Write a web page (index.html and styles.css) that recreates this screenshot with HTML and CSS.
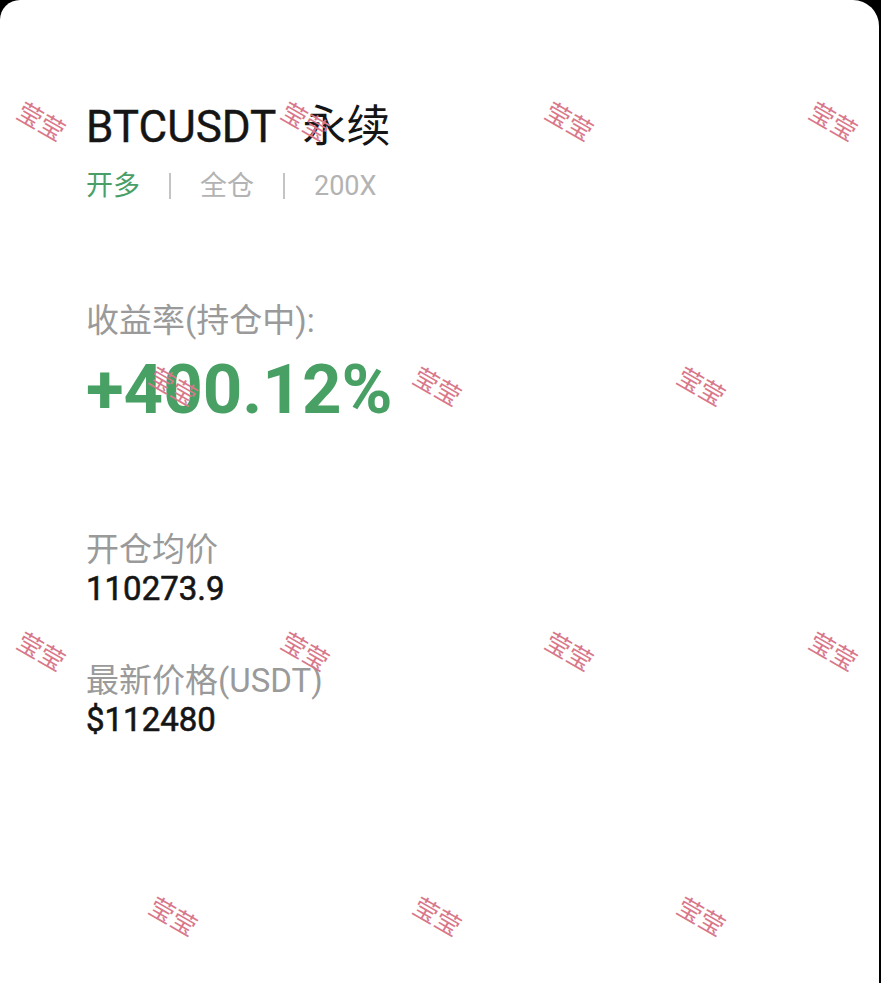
FILE: index.html
```html
<!DOCTYPE html>
<html lang="zh-CN">
<head>
    <meta charset="UTF-8">
    <meta name="viewport" content="width=device-width, initial-scale=1.0">
    <title>BTCUSDT 永续</title>
    <link rel="stylesheet" href="styles.css">
</head>
<body>
    <div class="card">
        <div class="content">
            <div class="title">BTCUSDT <span class="title-cn">永续</span></div>
            <div class="tags">
                <span class="tag-long">开多</span>
                <span class="divider"></span>
                <span class="tag-grey">全仓</span>
                <span class="divider"></span>
                <span class="tag-grey">200X</span>
            </div>

            <div class="label label-roi">收益率(持仓中):</div>
            <div class="roi">+400.12%</div>

            <div class="label label-open">开仓均价</div>
            <div class="value">110273.9</div>

            <div class="label label-last">最新价格(USDT)</div>
            <div class="value">$112480</div>
        </div>

        <!-- watermark layer -->
        <div class="watermarks">
            <div class="wm-row wm-row-a">
                <span class="wm">莹莹</span>
                <span class="wm">莹莹</span>
                <span class="wm">莹莹</span>
                <span class="wm">莹莹</span>
            </div>
            <div class="wm-row wm-row-b">
                <span class="wm">莹莹</span>
                <span class="wm">莹莹</span>
                <span class="wm">莹莹</span>
            </div>
            <div class="wm-row wm-row-a">
                <span class="wm">莹莹</span>
                <span class="wm">莹莹</span>
                <span class="wm">莹莹</span>
                <span class="wm">莹莹</span>
            </div>
            <div class="wm-row wm-row-b">
                <span class="wm">莹莹</span>
                <span class="wm">莹莹</span>
                <span class="wm">莹莹</span>
            </div>
        </div>
    </div>
</body>
</html>
```

FILE: styles.css
```css
body {
    margin: 0;
    background-color: #000;
    font-family: Roboto, "Noto Sans CJK SC", sans-serif;
}

.card {
    position: relative;
    background-color: #fff;
    margin-right: 2px;
    min-height: 983px;
    border-top-left-radius: 20px;
    border-top-right-radius: 26px;
    overflow: hidden;
}

.content {
    padding: 102px 0 0 86px;
}

.title {
    font-size: 44px;
    line-height: 50px;
    color: #151515;
    -webkit-text-stroke: 0.4px #151515;
}

.title-cn {
    margin-left: 16px;
    -webkit-text-stroke: 0;
}

.tags {
    display: flex;
    align-items: center;
    gap: 29px;
    margin-top: 16px;
    height: 36px;
    font-size: 27px;
    line-height: 36px;
}

.tag-long {
    color: #4a9f69;
}

.tag-grey {
    color: #b3b3b3;
}

.divider {
    width: 2px;
    height: 26px;
    background-color: #c4c4c4;
}

.label {
    font-size: 33px;
    line-height: 39px;
    color: #9a9a9a;
}

.label-roi {
    margin-top: 97px;
}

.roi {
    margin-top: 10px;
    font-size: 69px;
    line-height: 80px;
    font-weight: bold;
    color: #48a064;
}

.label-open {
    margin-top: 100px;
}

.label-last {
    margin-top: 53px;
}

.value {
    font-size: 33px;
    line-height: 39px;
    color: #151515;
    -webkit-text-stroke: 0.6px #151515;
}

.watermarks {
    position: absolute;
    top: 105px;
    left: 0;
    right: 0;
    display: flex;
    flex-direction: column;
    gap: 235px;
    pointer-events: none;
}

.wm-row {
    display: flex;
    height: 30px;
    align-items: center;
    gap: 204px;
}

.wm-row-a {
    padding-left: 12px;
}

.wm-row-b {
    padding-left: 144px;
}

.wm {
    width: 60px;
    text-align: center;
    font-family: "Noto Sans CJK SC", sans-serif;
    font-size: 25px;
    line-height: 30px;
    color: #d9788b;
    transform: rotate(30deg);
    white-space: nowrap;
}
```
